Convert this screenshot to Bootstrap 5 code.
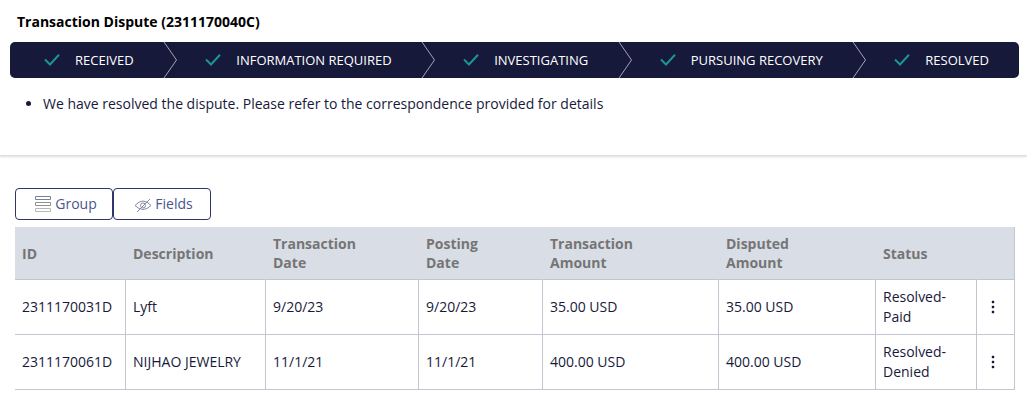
<!DOCTYPE html>
<html lang="en">
<head>
<meta charset="utf-8">
<meta name="viewport" content="width=device-width, initial-scale=1">
<title>Transaction Dispute</title>
<link href="https://cdn.jsdelivr.net/npm/bootstrap@5.3.0/dist/css/bootstrap.min.css" rel="stylesheet">
<style>
  body { font-family: "Open Sans", sans-serif; font-size: 14px; line-height: 20px; color: #17193b; background: #fff; }
  .case-header { padding: 12px 8px 41px 10px; border-bottom: 1px solid #dfdfdf; box-shadow: 0 1px 2px #ddd; }
  .case-title { font-size: 14px; line-height: 20px; font-weight: 700; color: #000; padding-left: 7px; margin-bottom: 10px; }
  .stages { background: #17193b; color: #fff; border-radius: 5px; font-size: 13px; height: 36px; overflow: hidden; }
  .stage { padding-left: 28px; }
  .stage:first-child { padding-left: 34px; }
  .stage:last-child { padding-right: 30px; }
  .stage-check { width: 16px; height: 12px; margin-right: 15px; }
  .stage-arrow { width: 14px; height: 36px; margin-left: auto; }
  .notes { padding-left: 33px; margin: 16px 0 0; }
  .case-items { padding: 32px 12px 15px 15px; }
  .tool-btn { width: 98px; height: 32px; padding: 0 0 0 3px; font-size: 14px; line-height: 20px; color: #4b5590; border: 1px solid #2f3669; border-radius: 4px; background: #fff; }
  .tool-btn svg { width: 18px; height: 18px; margin-right: 3px; }
  .dispute-table { table-layout: fixed; border-collapse: separate; border-spacing: 0; margin: 7px 0 0; --bs-table-color: #17193b; color: #17193b; }
  .dispute-table > :not(caption) > * > * { padding: 7px; vertical-align: middle; border: 0 solid #c0c5cf; border-width: 0 1px 1px 0; }
  .dispute-table > thead > tr > th { background: #d9dde6; color: #757575; height: 53px; line-height: 19px; border-right-color: #dcdbe1; }
  .dispute-table > thead > tr > :last-child { border-right-color: #c0c5cf; }
  .dispute-table > tbody > tr > td { height: 55px; }
  .c-id { width: 11.1%; } .c-desc { width: 14%; } .c-tdate { width: 15.3%; } .c-pdate { width: 12.4%; }
  .c-tamt { width: 17.6%; } .c-damt { width: 15.7%; } .c-status { width: 10.1%; } .c-menu { width: 3.8%; }
  .row-menu { border: 0; background: none; padding: 0; width: 18px; height: 20px; }
</style>
</head>
<body>
<svg width="0" height="0" class="position-absolute" aria-hidden="true">
  <symbol id="check" viewBox="0 0 16 12"><path d="M1 5.500l5 5L15 .7" fill="none" stroke="#1a958f" stroke-width="2"/></symbol>
  <symbol id="arrow" viewBox="0 0 14 36"><path d="M1 0L13.500 18 1 36" fill="none" stroke="#a3a4b3"/></symbol>
  <symbol id="dots" viewBox="0 0 4 14"><path d="M1 1h2v2h-2zM1 6h2v2h-2zM1 11h2v2h-2z" fill="#17193b" stroke="#17193b" stroke-width=".4"/></symbol>
</svg>
<header class="case-header">
  <h1 class="case-title mt-0">Transaction Dispute (2311170040C)</h1>
  <ol class="stages list-unstyled d-flex mb-0">
    <li class="stage d-flex align-items-center flex-grow-1"><svg class="stage-check"><use href="#check"/></svg>RECEIVED<svg class="stage-arrow"><use href="#arrow"/></svg></li>
    <li class="stage d-flex align-items-center flex-grow-1"><svg class="stage-check"><use href="#check"/></svg>INFORMATION REQUIRED<svg class="stage-arrow"><use href="#arrow"/></svg></li>
    <li class="stage d-flex align-items-center flex-grow-1"><svg class="stage-check"><use href="#check"/></svg>INVESTIGATING<svg class="stage-arrow"><use href="#arrow"/></svg></li>
    <li class="stage d-flex align-items-center flex-grow-1"><svg class="stage-check"><use href="#check"/></svg>PURSUING RECOVERY<svg class="stage-arrow"><use href="#arrow"/></svg></li>
    <li class="stage d-flex align-items-center"><svg class="stage-check"><use href="#check"/></svg>RESOLVED</li>
  </ol>
  <ul class="notes"><li>We have resolved the dispute. Please refer to the correspondence provided for details</li></ul>
</header>
<main class="case-items">
  <div class="d-flex">
    <button type="button" class="tool-btn btn d-flex align-items-center justify-content-center"><svg viewBox="0 0 18 18" fill="none"><path d="M1.500 1.500h15v3h-15z" stroke="#7880a0"/><path d="M1.500 7.500h15v3h-15z" stroke="#929090"/><path d="M1.500 13.500h15v3h-15z" stroke="#b8b8b8"/></svg>Group</button>
    <button type="button" class="tool-btn btn d-flex align-items-center justify-content-center"><svg viewBox="0 0 18 18" fill="none" stroke="#858aa6"><path d="M1 10.500Q9 1.500 17 10.500Q9 18.500 1 10.500ZM3 17L16 4"/><circle cx="9" cy="10.500" r="2.500"/></svg>Fields</button>
  </div>
  <table class="table dispute-table">
    <thead><tr>
      <th scope="col" class="c-id">ID</th><th scope="col" class="c-desc">Description</th><th scope="col" class="c-tdate">Transaction<br>Date</th><th scope="col" class="c-pdate">Posting<br>Date</th><th scope="col" class="c-tamt">Transaction<br>Amount</th><th scope="col" class="c-damt">Disputed<br>Amount</th><th scope="col" class="c-status">Status</th><th scope="col" class="c-menu" aria-label="Actions"></th>
    </tr></thead>
    <tbody>
      <tr><td>2311170031D</td><td>Lyft</td><td>9/20/23</td><td>9/20/23</td><td>35.00 USD</td><td>35.00 USD</td><td>Resolved-Paid</td><td><button type="button" class="row-menu d-flex align-items-center justify-content-center" aria-label="Actions"><svg width="4" height="14"><use href="#dots"/></svg></button></td></tr>
      <tr><td>2311170061D</td><td>NIJHAO JEWELRY</td><td>11/1/21</td><td>11/1/21</td><td>400.00 USD</td><td>400.00 USD</td><td>Resolved-Denied</td><td><button type="button" class="row-menu d-flex align-items-center justify-content-center" aria-label="Actions"><svg width="4" height="14"><use href="#dots"/></svg></button></td></tr>
    </tbody>
  </table>
</main>
<script src="https://cdn.jsdelivr.net/npm/bootstrap@5.3.0/dist/js/bootstrap.bundle.min.js"></script>
</body>
</html>
